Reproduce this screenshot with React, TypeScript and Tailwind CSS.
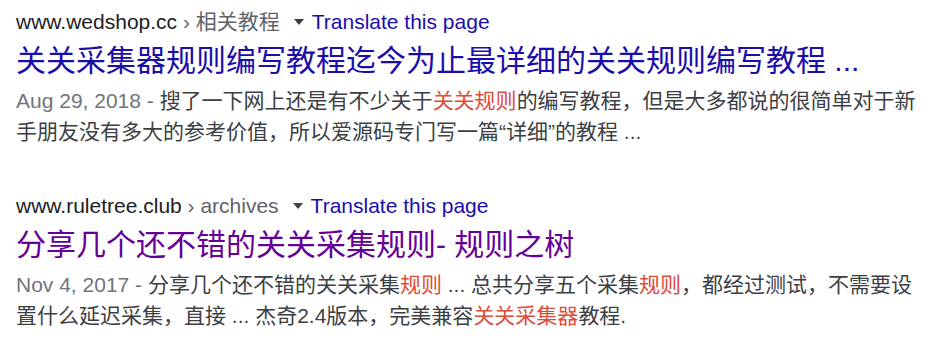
import React from 'react';

type Part = { text: string; em?: boolean };

interface Result {
  site: string;
  path: string;
  title: string;
  visited: boolean;
  date: string;
  snippet: Part[];
}

const results: Result[] = [
  {
    site: 'www.wedshop.cc',
    path: '相关教程',
    title: '关关采集器规则编写教程迄今为止最详细的关关规则编写教程 ...',
    visited: false,
    date: 'Aug 29, 2018',
    snippet: [
      { text: '搜了一下网上还是有不少关于' },
      { text: '关关规则', em: true },
      { text: '的编写教程，但是大多都说的很简单对于新手朋友没有多大的参考价值，所以爱源码专门写一篇“详细”的教程 ...' },
    ],
  },
  {
    site: 'www.ruletree.club',
    path: 'archives',
    title: '分享几个还不错的关关采集规则- 规则之树',
    visited: true,
    date: 'Nov 4, 2017',
    snippet: [
      { text: '分享几个还不错的关关采集' },
      { text: '规则', em: true },
      { text: ' ... 总共分享五个采集' },
      { text: '规则', em: true },
      { text: '，都经过测试，不需要设置什么延迟采集，直接 ... 杰奇2.4版本，完美兼容' },
      { text: '关关采集器', em: true },
      { text: '教程.' },
    ],
  },
];

const font = { fontFamily: '"Liberation Sans", Arial, "Noto Sans CJK SC", sans-serif' };

const SearchResult: React.FC<{ r: Result }> = ({ r }) => (
  <div className="w-[905px]">
    <div className="flex items-center text-[21px] leading-[32px] whitespace-nowrap">
      <span className="text-[#202124]">{r.site}</span>
      <span className="text-[#5f6368]">&nbsp;› {r.path}</span>
      <span className="ml-[14px] mr-[8px] w-0 h-0 border-x-[5.5px] border-x-transparent border-t-[6px] border-t-[#3c4043]" />
      <span className="text-[#1a0dab]">Translate this page</span>
    </div>
    <div
      className={`mt-[4px] text-[30px] leading-[37px] whitespace-nowrap ${
        r.visited ? 'text-[#660099]' : 'text-[#1a0dab]'
      }`}
    >
      {r.title}
    </div>
    <div className="mt-[6px] text-[21px] leading-[31px] text-[#3c4043]">
      <span className="text-[#70757a]">{r.date} - </span>
      {r.snippet.map((p, i) => (
        <span key={i} className={p.em ? 'text-[#dd4b39]' : undefined}>
          {p.text}
        </span>
      ))}
    </div>
  </div>
);

export default function App() {
  return (
    <div className="w-[929px] h-[344px] bg-white pl-[16px] pt-[6px] overflow-hidden" style={font}>
      <div className="flex flex-col gap-[43px]">
        {results.map((r) => (
          <SearchResult key={r.site} r={r} />
        ))}
      </div>
    </div>
  );
}
